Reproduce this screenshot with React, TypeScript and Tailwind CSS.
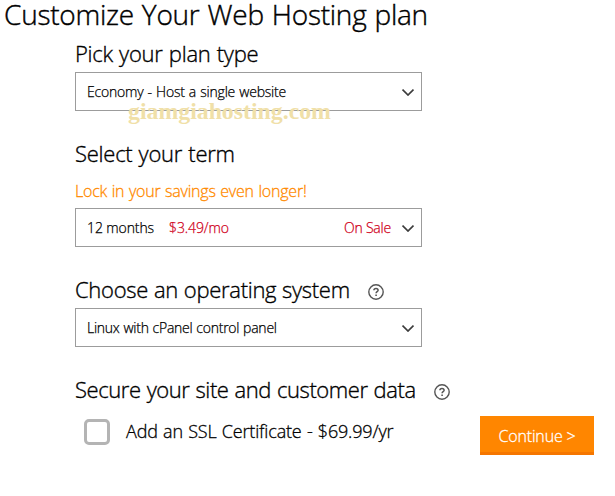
import type { ReactNode } from "react"

function Chevron() {
  return (
    <svg className="h-2 w-3 shrink-0" viewBox="0 0 12 8" fill="none" stroke="#3c3c3c" strokeWidth="1.7">
      <path d="M0.5 1.5 6 7 11.5 1.5" />
    </svg>
  )
}

function HelpIcon() {
  return (
    <svg className="h-4 w-4 shrink-0" viewBox="0 0 16 16" fill="none" stroke="#555555">
      <circle cx="8" cy="8" r="7.2" strokeWidth="1.4" />
      <path d="M5.9 6.3c0-1.3.9-1.9 2.1-1.9s2.1.7 2.1 1.8c0 1.5-2 1.4-2 3" strokeWidth="1.5" />
      <path d="M7.3 11.3h1.6" strokeWidth="1.6" />
    </svg>
  )
}

function Heading({ children, className }: { children: ReactNode; className: string }) {
  return (
    <h2 className={`text-[22px] leading-[28px] font-light whitespace-nowrap [-webkit-text-stroke:0.35px] ${className}`}>
      {children}
    </h2>
  )
}

function SelectBox({ children }: { children: ReactNode }) {
  return (
    <button className="flex h-[39px] w-[347px] items-center border border-[#9c9c9c] bg-white pr-[7px] pl-[11px] text-left text-[14px] font-light whitespace-nowrap [-webkit-text-stroke:0.25px]">
      {children}
      <Chevron />
    </button>
  )
}

export default function App() {
  return (
    <main className="h-[496px] w-[615px] overflow-hidden bg-white font-['Open_Sans','Noto_Sans',sans-serif] text-black">
      <h1 className="h-[39px] pl-1 text-[28px] leading-[29px] font-light tracking-[-0.25px] [word-spacing:1px] whitespace-nowrap [-webkit-text-stroke:0.4px]">
        Customize Your Web Hosting plan
      </h1>

      <div className="pl-[75px]">
        <section className="relative h-[100px]">
          <Heading className="h-[33px] tracking-[-0.25px] [word-spacing:0.7px]">Pick your plan type</Heading>
          <SelectBox>
            <span className="flex-1 tracking-[-0.2px] [word-spacing:0.7px]">Economy - Host a single website</span>
          </SelectBox>
          <span className="absolute top-[60px] left-[53px] font-['Liberation_Serif',serif] text-[23.8px] leading-[24px] font-bold text-[#f0e0a8]">
            giamgiahosting.com
          </span>
        </section>

        <section className="h-[136px]">
          <Heading className="h-[42px] tracking-[-0.25px] [word-spacing:0.7px]">Select your term</Heading>
          <p className="h-[27px] text-[16px] leading-[20px] font-light tracking-[-0.22px] [word-spacing:0.7px] text-[#ff8a00] [-webkit-text-stroke:0.3px]">
            Lock in your savings even longer!
          </p>
          <SelectBox>
            <span className="w-[82px] tracking-[-0.1px]">12 months</span>
            <span className="flex-1 tracking-[-0.1px] text-[#d0021b]">$3.49/mo</span>
            <span className="mr-[11px] tracking-[-0.2px] text-[#d0021b]">On Sale</span>
          </SelectBox>
        </section>

        <section className="h-[100px]">
          <div className="flex h-[33px]">
            <Heading className="w-[293px] tracking-[-0.3px] [word-spacing:0.5px]">Choose an operating system</Heading>
            <div className="pt-[9px]">
              <HelpIcon />
            </div>
          </div>
          <SelectBox>
            <span className="flex-1 tracking-[-0.25px] [word-spacing:0.5px]">Linux with cPanel control panel</span>
          </SelectBox>
        </section>

        <section>
          <div className="flex h-[41px]">
            <Heading className="w-[359px] tracking-[-0.42px] [word-spacing:0.7px]">
              Secure your site and customer data
            </Heading>
            <div className="pt-[9px]">
              <HelpIcon />
            </div>
          </div>
          <div className="flex">
            <label className="flex w-[405px] pt-[3px] pl-[9px]">
              <input type="checkbox" className="h-[26px] w-[26px] appearance-none rounded-[5px] border-3 border-[#b4b4b4]" />
              <span className="pl-4 text-[18px] leading-[24px] font-light tracking-[-0.17px] [word-spacing:0.8px] whitespace-nowrap [-webkit-text-stroke:0.3px]">
                Add an SSL Certificate - $69.99/yr
              </span>
            </label>
            <button className="h-[39px] w-[114px] border-b-3 border-[#f57600] bg-[#ff8600] pt-1 text-[16px] leading-[32px] font-light tracking-[-0.15px] text-white [-webkit-text-stroke:0.3px]">
              Continue &gt;
            </button>
          </div>
        </section>
      </div>
    </main>
  )
}
